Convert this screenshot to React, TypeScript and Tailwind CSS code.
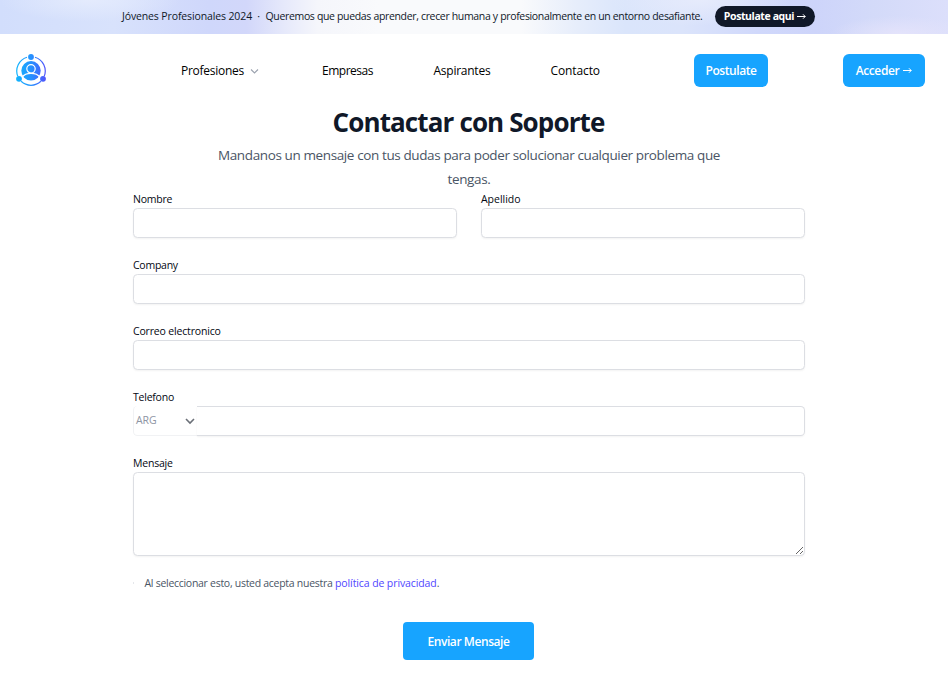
import type { ReactNode } from "react";

function Field({ label, labelClass, children }: { label: string; labelClass: string; children: ReactNode }) {
  return (
    <div className="min-w-0 flex-1">
      <label className={`block h-[18px] text-[10.5px] leading-[18px] font-medium whitespace-nowrap text-gray-950 ${labelClass}`}>
        {label}
      </label>
      {children}
    </div>
  );
}

const inputClass = "block h-[30px] w-full rounded-[4.5px] border border-[#dcdee3] bg-white px-2 shadow-xs outline-none";

function Arrow() {
  return (
    <svg className="h-[7px] w-[9px]" viewBox="0 0 9 7" fill="none" stroke="currentColor">
      <path d="M0 3.500H8.200M6 1.300 8.200 3.500 6 5.700" />
    </svg>
  );
}

function Logo() {
  return (
    <svg className="-mt-[2px] h-8 w-[30px]" viewBox="0 0 30 32" fill="none">
      <defs>
        <linearGradient id="brand" x1="0" y1="0" x2="30" y2="0" gradientUnits="userSpaceOnUse">
          <stop stopColor="#12b5fd" />
          <stop offset="0.5" stopColor="#2592ff" />
          <stop offset="1" stopColor="#5152fb" />
        </linearGradient>
      </defs>
      <g stroke="url(#brand)" strokeWidth="1.2">
        <path d="M19 3.270A14.300 14.300 0 0 1 28.200 22.300" />
        <path d="M24.900 27.300A14.300 14.300 0 0 1 5.100 27.300" />
        <path d="M1.800 22.300A14.300 14.300 0 0 1 11 3.270" />
      </g>
      <circle cx="15" cy="3" r="2.9" fill="url(#brand)" />
      <circle cx="3" cy="24.8" r="2.9" fill="url(#brand)" />
      <circle cx="27" cy="24.8" r="2.9" fill="url(#brand)" />
      <circle cx="15" cy="16.8" r="9.7" fill="url(#brand)" />
      <circle cx="15" cy="14.8" r="4.2" stroke="white" strokeWidth="1.2" />
      <path d="M6.300 23C8.300 20 11.500 19.300 15 19.300s6.700.7 8.700 3.700" stroke="white" strokeWidth="1.3" />
    </svg>
  );
}

export default function App() {
  return (
    <div className="h-[685px] overflow-hidden bg-white font-['Open_Sans','Noto_Sans',sans-serif] text-gray-900">
      <div className="flex h-[34px] items-center bg-[radial-gradient(ellipse_90px_22px_at_90px_0px,#e4ebfd_0%,transparent_100%),radial-gradient(ellipse_90px_26px_at_700px_0px,#e6ebfc_0%,transparent_100%),radial-gradient(ellipse_70px_18px_at_900px_34px,#e4e3fb_0%,transparent_100%),linear-gradient(90deg,#d2defc_0%,#d8e2fc_12%,#cfd7fb_22%,#d2d7fa_26%,#e6e9fb_30%,#f5f6fb_33.500%,#f9fafc_40%,#f9fafc_55%,#e6edfb_61%,#dae5fb_66%,#dbe4fb_72%,#d0d8fb_80%,#cdd4fa_86%,#d3daf9_92%,#dcdffb_100%)] pb-[2px] pl-[122px] text-[10.5px] leading-[18px] whitespace-nowrap">
        <strong className="w-[130px] font-medium tracking-[-0.124px]">Jóvenes Profesionales 2024</strong>
        <span className="w-[13.5px] text-center">·</span>
        <span className="w-[449.5px] tracking-[-0.339px]">
          Queremos que puedas aprender, crecer humana y profesionalmente en un entorno desafiante.
        </span>
        <a className="mt-px flex h-[21px] w-[100px] items-center justify-center gap-[3px] rounded-full bg-gray-900 pb-px font-bold tracking-[-0.4px] text-white">
          Postulate aqui <Arrow />
        </a>
      </div>

      <header className="flex h-[73px] items-center pl-4 text-[12px] leading-[18px] font-medium whitespace-nowrap text-black">
        <Logo />
        <nav className="flex items-center pl-[135px]">
          <a className="flex w-[141px] items-center gap-[6px]">
            <span className="tracking-[-0.264px]">Profesiones</span>
            <svg className="mt-px h-[9px] w-[9px]" viewBox="0 0 9 9" fill="none">
              <path d="M1 2.500 4.500 6 8 2.500" stroke="#9ca3af" strokeWidth="1.1" />
            </svg>
          </a>
          <a className="w-[111.500px] tracking-[-0.48px]">Empresas</a>
          <a className="w-[117px] tracking-[-0.25px]">Aspirantes</a>
          <a className="w-[143.500px] tracking-[-0.11px]">Contacto</a>
        </nav>
        <a className="flex h-[33px] w-[74px] items-center justify-center rounded-[6px] bg-[#17a4ff] font-semibold tracking-[-0.431px] text-white">
          Postulate
        </a>
        <a className="ml-[75px] flex h-[33px] w-[82px] items-center justify-center gap-[4px] rounded-[6px] bg-[#17a4ff] font-semibold tracking-[-0.383px] text-white">
          Acceder <Arrow />
        </a>
      </header>

      <main className="ml-[133px] w-[672px]">
        <div className="text-center whitespace-nowrap">
          <h2 className="-mt-px mr-px h-[37px] text-[26px] leading-[32px] font-bold tracking-[-0.88px]">Contactar con Soporte</h2>
          <p className="text-[13.5px] leading-6 tracking-[-0.386px] text-gray-600">
            Mandanos un mensaje con tus dudas para poder solucionar cualquier problema que
            <br />
            tengas.
          </p>
        </div>

        <form className="-mt-px flex flex-col gap-[18px]">
          <div className="flex gap-6">
            <Field label="Nombre" labelClass="tracking-[-0.22px]">
              <input className={inputClass} />
            </Field>
            <Field label="Apellido" labelClass="tracking-[-0.02px]">
              <input className={inputClass} />
            </Field>
          </div>
          <Field label="Company" labelClass="tracking-[-0.25px]">
            <input className={inputClass} />
          </Field>
          <Field label="Correo electronico" labelClass="tracking-[-0.17px]">
            <input className={inputClass} />
          </Field>
          <Field label="Telefono" labelClass="tracking-[-0.229px]">
            <div className="flex">
              <div className="flex h-[30px] w-[64px] items-center justify-between rounded-l-[4.5px] border-b border-l border-[#f1f2f4] bg-white pt-px pr-[2px] pl-[2px] text-[10.5px] text-[#8e95a3]">
                <span className="tracking-[-0.085px]">ARG</span>
                <svg className="h-[10px] w-[10px]" viewBox="0 0 10 10" fill="none">
                  <path d="M1 3 5 7 9 3" stroke="#6b7078" strokeWidth="1.6" />
                </svg>
              </div>
              <input className="block h-[30px] min-w-0 flex-1 rounded-r-[4.5px] border border-l-0 border-[#dcdee3] bg-white px-2 shadow-xs outline-none" />
            </div>
          </Field>
          <Field label="Mensaje" labelClass="tracking-[-0.2px]">
            <textarea className="block h-[84px] w-full resize rounded-[4.5px] border border-[#dcdee3] bg-white px-2 shadow-xs outline-none" />
          </Field>
          <div className="flex h-[18px] items-center text-[10.5px] leading-[18px] whitespace-nowrap text-gray-600">
            <span className="mr-[10.500px] h-[2px] w-px bg-gray-200" />
            <span className="w-[190.500px] tracking-[-0.282px]">Al seleccionar esto, usted acepta nuestra</span>
            <a className="font-medium tracking-[-0.1px] text-[#4f46ff]">política de privacidad</a>
            <span>.</span>
          </div>
        </form>
        <button className="mt-[30px] ml-[270px] flex h-[38px] w-[131px] items-center justify-center rounded-[4px] bg-[#17a4ff] pt-[2px] text-[12px] font-semibold tracking-[-0.428px] text-white">
          Enviar Mensaje
        </button>
      </main>
    </div>
  );
}
